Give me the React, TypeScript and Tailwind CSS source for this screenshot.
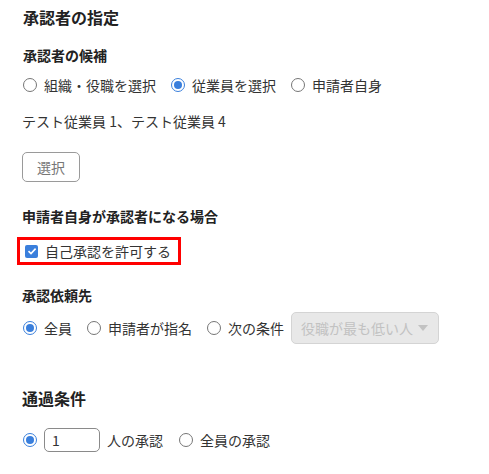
import React from 'react';

function Radio({ checked = false }: { checked?: boolean }) {
  return (
    <span
      className={`inline-flex items-center justify-center w-[14px] h-[14px] rounded-full border-[1.5px] shrink-0 ${
        checked ? 'border-[#3a7fdc]' : 'border-[#767676]'
      }`}
    >
      {checked && <span className="w-[8px] h-[8px] rounded-full bg-[#3a7fdc]" />}
    </span>
  );
}

function RadioOption({ label, checked = false }: { label: string; checked?: boolean }) {
  return (
    <label className="flex items-center gap-[7px]">
      <Radio checked={checked} />
      <span>{label}</span>
    </label>
  );
}

export default function App() {
  return (
    <div
      className="w-[489px] h-[474px] bg-white text-[#333] text-[14px] pl-[23px] flex flex-col"
      style={{ fontFamily: '"Noto Sans CJK JP", "Noto Sans", sans-serif' }}
    >
      <div className="h-[34px] flex items-center text-[16px] font-bold text-[#222]">承認者の指定</div>

      <div className="mt-[11px] h-[20px] flex items-center font-bold text-[#222]">承認者の候補</div>
      <div className="mt-[10px] h-[20px] flex items-center gap-[15px]">
        <RadioOption label="組織・役職を選択" />
        <RadioOption label="従業員を選択" checked />
        <RadioOption label="申請者自身" />
      </div>

      <div className="mt-[16px] h-[20px] flex items-center -ml-[1px]">テスト従業員 1、テスト従業員 4</div>

      <div className="mt-[21px]">
        <button className="w-[58px] h-[30px] -ml-[1px] rounded-[5px] border border-[#9a9a9a] text-[#777] bg-white">
          選択
        </button>
      </div>

      <div className="mt-[24px] h-[20px] flex items-center font-bold text-[#222] -ml-[1px]">申請者自身が承認者になる場合</div>
      <div className="mt-[11px] -ml-[6px] w-[164px] h-[28px] border-[3px] border-[#ff0000] flex items-center pl-[5px] gap-[7px]">
        <span className="w-[13px] h-[13px] rounded-[2px] bg-[#3a7fdc] flex items-center justify-center">
          <svg width="10" height="10" viewBox="0 0 10 10">
            <path d="M1.5 5.2 L4 7.6 L8.6 2.6" fill="none" stroke="white" strokeWidth="1.6" />
          </svg>
        </span>
        <span>自己承認を許可する</span>
      </div>

      <div className="mt-[20px] h-[20px] flex items-center font-bold text-[#222] -ml-[1px]">承認依頼先</div>
      <div className="mt-[7px] h-[32px] flex items-center">
        <div className="flex items-center gap-[15px]">
          <RadioOption label="全員" checked />
          <RadioOption label="申請者が指名" />
          <RadioOption label="次の条件" />
        </div>
        <div className="ml-[7px] w-[148px] h-[32px] rounded-[5px] border border-[#d4d4d4] bg-[#e8e8e8] flex items-center justify-between pl-[9px] pr-[10px] text-[#c2c2c2]">
          <span>役職が最も低い人</span>
          <svg width="10" height="6" viewBox="0 0 10 6">
            <path d="M0 0 L10 0 L5 6 Z" fill="#c2c2c2" />
          </svg>
        </div>
      </div>

      <div className="mt-[42px] h-[24px] flex items-center text-[16px] font-bold text-[#222] -ml-[1px]">通過条件</div>
      <div className="mt-[18px] h-[24px] flex items-center">
        <Radio checked />
        <input
          readOnly
          value="1"
          className="ml-[7px] w-[56px] h-[24px] rounded-[5px] border border-[#8a8a8a] px-[7px] text-[#333] outline-none"
        />
        <span className="ml-[7px]">人の承認</span>
        <span className="ml-[16px]">
          <RadioOption label="全員の承認" />
        </span>
      </div>
    </div>
  );
}
